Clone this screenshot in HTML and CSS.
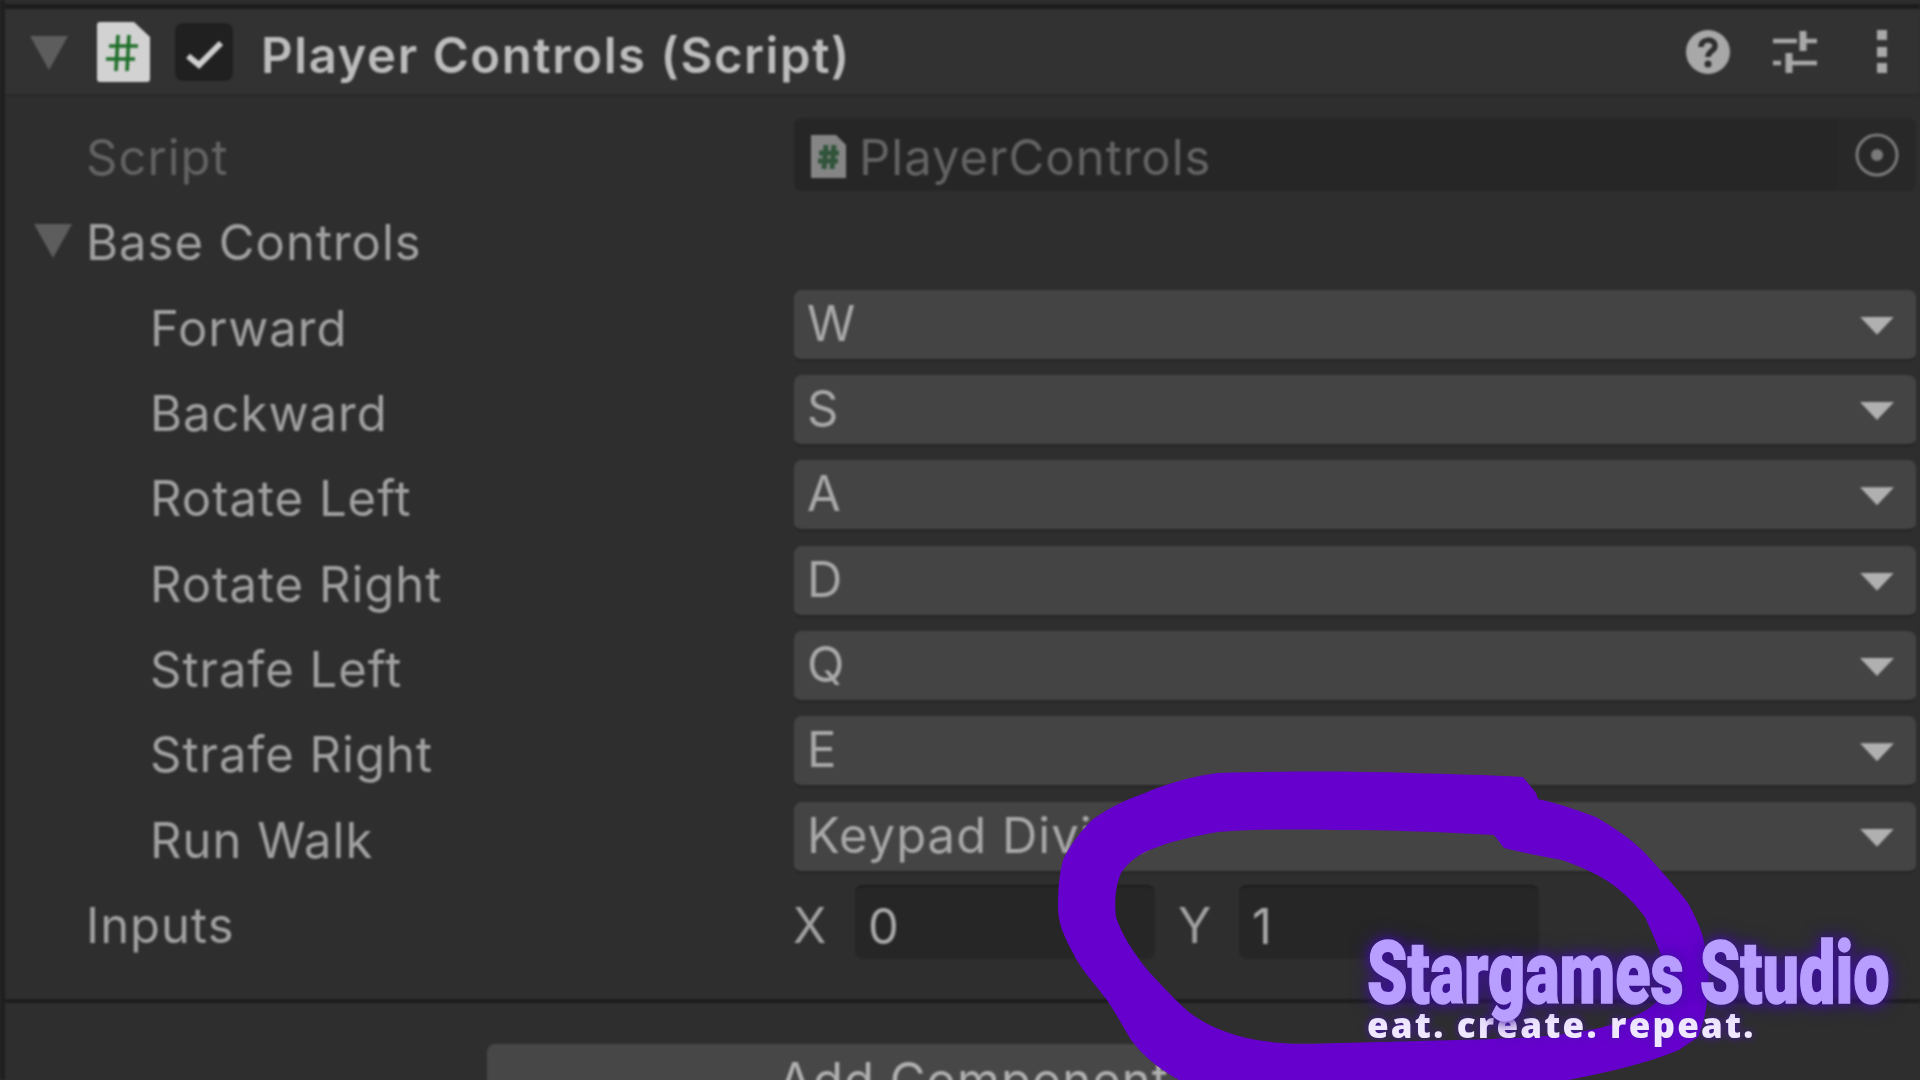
FILE: index.html
```html
<!DOCTYPE html>
<html lang="en">
<head>
<meta charset="utf-8">
<title>Player Controls (Script)</title>
<link rel="stylesheet" href="styles.css">
</head>
<body>
<div class="stage">
  <main class="panel">
    <header class="head">
      <svg class="tri-head" viewBox="0 0 38 34"><path d="M0 0H38L19 34Z"/></svg>
      <svg class="script-icon" viewBox="0 0 53 60"><path class="doc" d="M3 0H37L53 15V57Q53 60 50 60H3Q0 60 0 57V3Q0 0 3 0Z"/><path class="hash" d="M21 13 19 49M32 13 30 49M12 24H41M9 37H38"/></svg>
      <span class="check"><svg viewBox="0 0 58 58"><path d="M13 33 24 42 46 20"/></svg></span>
      <h1 class="title">Player Controls (Script)</h1>
      <div class="tools">
        <svg class="tool-help" viewBox="0 0 44 44"><circle cx="22" cy="22" r="22"/><path class="q" d="M15 17C15 8 29 8 29 16C29 21 22 21 22 27"/><circle class="qd" cx="22" cy="34" r="3.5"/></svg>
        <svg class="tool-sliders" viewBox="0 0 44 44"><path class="sl-thin" d="M0 11H24M30 11H44M0 33H8M16 33H44"/><path class="sl-thick" d="M30 1V21M16 23V43"/></svg>
        <svg class="tool-dots" viewBox="0 0 10 44"><rect y="0" width="10" height="10"/><rect y="17" width="10" height="10"/><rect y="33" width="10" height="10"/></svg>
      </div>
    </header>

    <section class="rows">
      <div class="row">
        <span class="label label-off">Script</span>
        <div class="field field-object">
          <svg class="mini-icon" viewBox="0 0 35 43"><path class="mini-doc" d="M0 0H25L35 10V43H0Z"/><path class="mini-hash" d="M15 10 13 34M23 10 21 34M8 18H28M7 26H27"/></svg>
          <span class="value-off">PlayerControls</span>
          <span class="target"><svg viewBox="0 0 44 44"><circle class="ring" cx="22" cy="22" r="20"/><circle class="dot" cx="22" cy="22" r="6"/></svg></span>
        </div>
      </div>
      <div class="row">
        <svg class="tri-group" viewBox="0 0 38 34"><path d="M0 0H38L19 34Z"/></svg>
        <span class="label">Base Controls</span>
      </div>
      <div class="row"><span class="label label-sub">Forward</span><div class="field field-drop"><span>W</span><i class="arrow"></i></div></div>
      <div class="row"><span class="label label-sub">Backward</span><div class="field field-drop"><span>S</span><i class="arrow"></i></div></div>
      <div class="row"><span class="label label-sub">Rotate Left</span><div class="field field-drop"><span>A</span><i class="arrow"></i></div></div>
      <div class="row"><span class="label label-sub">Rotate Right</span><div class="field field-drop"><span>D</span><i class="arrow"></i></div></div>
      <div class="row"><span class="label label-sub">Strafe Left</span><div class="field field-drop"><span>Q</span><i class="arrow"></i></div></div>
      <div class="row"><span class="label label-sub">Strafe Right</span><div class="field field-drop"><span>E</span><i class="arrow"></i></div></div>
      <div class="row"><span class="label label-sub">Run Walk</span><div class="field field-drop"><span>Keypad Divide</span><i class="arrow"></i></div></div>
      <div class="row">
        <span class="label">Inputs</span>
        <div class="vector">
          <span class="axis">X</span><span class="num">0</span>
          <span class="axis axis-y">Y</span><span class="num">1</span>
        </div>
      </div>
    </section>

    <div class="foot"><button class="add" type="button">Add Component</button></div>
  </main>

  <svg class="scribble" viewBox="0 0 1920 1080"><path d="M1523 777 1536 793 1538 799C1565 805 1582 812 1596 817C1618 830 1632 840 1645 853C1665 875 1678 890 1688 903C1696 918 1700 927 1703 937C1708 960 1710 975 1708 993C1706 1015 1702 1028 1698 1037L1679 1050C1640 1066 1600 1074 1543 1085L1188 1085C1160 1070 1145 1058 1131 1040C1122 1025 1115 1012 1107 1000C1090 978 1080 968 1073 953C1063 935 1058 922 1058 907C1058 890 1059 875 1063 860C1070 845 1080 832 1092 820C1108 808 1125 800 1145 793C1170 782 1195 776 1218 773C1290 771 1350 771 1412 773C1450 774 1490 775 1523 777ZM1494 835C1440 832 1390 830 1339 830C1300 829 1255 829 1218 832C1195 836 1172 841 1155 848C1140 853 1128 862 1121 873C1116 885 1114 900 1116 917C1122 935 1132 950 1145 967C1158 982 1168 992 1179 1003C1195 1020 1222 1034 1257 1040C1290 1045 1310 1044 1340 1043C1380 1042 1420 1041 1458 1040C1530 1038 1580 1036 1620 1022C1640 1015 1652 1008 1660 998C1665 990 1668 982 1666 970C1660 950 1653 935 1645 917C1636 905 1628 897 1616 887C1600 875 1582 867 1562 860C1540 856 1520 852 1504 848Z"/></svg>

  <div class="brand">
    <div class="brand-name">Stargames Studio</div>
    <div class="brand-tag">eat. create. repeat.</div>
  </div>
</div>
</body>
</html>
```

FILE: styles.css
```css
* { box-sizing: border-box; }
html, body { margin: 0; padding: 0; height: 100%; background: #2e2e2e; overflow: hidden; }
.stage { position: relative; width: 1920px; height: 1080px; overflow: hidden; }

.panel {
  width: 1920px;
  height: 1080px;
  padding-top: 4px;
  background: #2e2e2e;
  border-left: 5px solid #1f1f1f;
  color: #a0a0a0;
  font-family: Inter, "Liberation Sans", sans-serif;
  font-size: 49px;
  letter-spacing: 1px;
  filter: blur(1.1px);
}

.head {
  display: flex;
  align-items: center;
  height: 92px;
  padding-left: 25px;
  background: #323232;
  border-top: 5px solid #1c1c1c;
  border-bottom: 2px solid #282828;
}
.tri-head { width: 38px; height: 34px; fill: #5d5d5d; margin-top: 2px; }
.script-icon { width: 53px; height: 60px; margin-left: 29px; }
.doc { fill: #d2d2d2; }
.hash { fill: none; stroke: #1f6f2a; stroke-width: 3.6; }
.check { width: 58px; height: 58px; margin-left: 25px; background: #202020; border-radius: 8px; display: flex; }
.check svg { width: 58px; height: 58px; fill: none; stroke: #cfcfcf; stroke-width: 6; }
.title { margin: 7px 0 0 28px; font-size: 49px; font-weight: 600; letter-spacing: 1.6px; color: #bcbcbc; line-height: 1; }
.tools { margin-left: auto; display: flex; align-items: center; padding-right: 33px; gap: 43px; }
.tool-help { width: 44px; height: 44px; fill: #a8a8a8; }
.tool-help .q { fill: none; stroke: #2e2e2e; stroke-width: 5.5; }
.tool-help .qd { fill: #2e2e2e; }
.tool-sliders { width: 44px; height: 44px; fill: none; stroke: #a8a8a8; }
.sl-thin { stroke-width: 4.5; }
.sl-thick { stroke-width: 7; }
.tool-dots { width: 10px; height: 44px; fill: #a8a8a8; margin-left: 17px; }

.rows { padding-top: 18px; }
.row { position: relative; display: flex; align-items: center; height: 85.33px; padding-left: 81px; }
.label { flex: 0 0 auto; line-height: 1; padding-top: 2px; }
.label-off { color: #636363; }
.label-sub { margin-left: 64px; }
.tri-group { position: absolute; left: 29px; top: 25px; width: 38px; height: 34px; fill: #5d5d5d; }

.field {
  position: absolute;
  left: 789px;
  right: 4px;
  top: 5px;
  height: 72px;
  padding-bottom: 2px;
  display: flex;
  align-items: center;
  border-radius: 8px;
  line-height: 1;
}
.field-drop { background: #444; border-bottom: 3px solid #272727; padding-left: 13px; color: #a8a8a8; }
.field-object { background: #262626; height: 73px; top: 4px; padding-left: 17px; padding-top: 6px; padding-bottom: 0; color: #636363; }
.mini-icon { width: 35px; height: 43px; margin-right: 13px; margin-top: -2px; }
.mini-doc { fill: #858585; }
.mini-hash { fill: none; stroke: #31543a; stroke-width: 5; }
.target { position: absolute; right: 0; top: 0; bottom: 0; width: 78px; background: #282828; border-radius: 0 8px 8px 0; display: flex; align-items: center; justify-content: center; }
.target svg { width: 44px; height: 44px; }
.ring { fill: none; stroke: #7a7a7a; stroke-width: 3; }
.dot { fill: #7a7a7a; }
.arrow { position: absolute; right: 22px; top: 27px; width: 34px; height: 18px; background: #b0b0b0; clip-path: polygon(0 0, 100% 0, 50% 100%); }

.vector { position: absolute; left: 788px; top: 0; bottom: 0; display: flex; align-items: center; }
.axis { width: 62px; color: #a0a0a0; line-height: 1; padding-top: 2px; }
.axis-y { width: 61px; margin-left: 23px; }
.num { width: 300px; height: 74px; background: #262626; border-top: 2px solid #1c1c1c; border-radius: 8px; padding-left: 13px; display: flex; align-items: center; color: #a8a8a8; margin-top: -6px; line-height: 1; padding-top: 8px; }

.foot { margin-top: 32px; border-top: 4px solid #1d1d1d; padding-top: 41px; display: flex; padding-left: 482px; }
.add { width: 973px; height: 72px; border: 0; border-radius: 8px 8px 0 0; background: #474747; color: #b0b0b0; font: inherit; letter-spacing: inherit; padding: 0; }

.scribble { position: absolute; inset: 0; width: 1920px; height: 1080px; fill: #6600cc; fill-rule: evenodd; filter: blur(0.7px); }

.brand { position: absolute; left: 1367px; top: 928px; width: 530px; filter: blur(0.7px); }
.brand-name {
  font-family: Roboto, "Liberation Sans", sans-serif;
  font-weight: 900;
  font-size: 88px;
  line-height: 90px;
  color: #b89eff;
  white-space: nowrap;
  transform-origin: left top;
  transform: scaleX(0.735);
  -webkit-text-stroke: 1.5px #b89eff;
  text-shadow: 0 0 12px #3e10a0, 0 0 24px #3e10a0;
}
.brand-tag {
  margin-top: -12px;
  font-family: "Open Sans", "Liberation Sans", sans-serif;
  font-weight: 800;
  font-size: 35px;
  letter-spacing: 2.2px;
  line-height: 38px;
  color: #f0e8ff;
  white-space: nowrap;
  text-shadow: 0 0 8px #4a18b0;
}
```
